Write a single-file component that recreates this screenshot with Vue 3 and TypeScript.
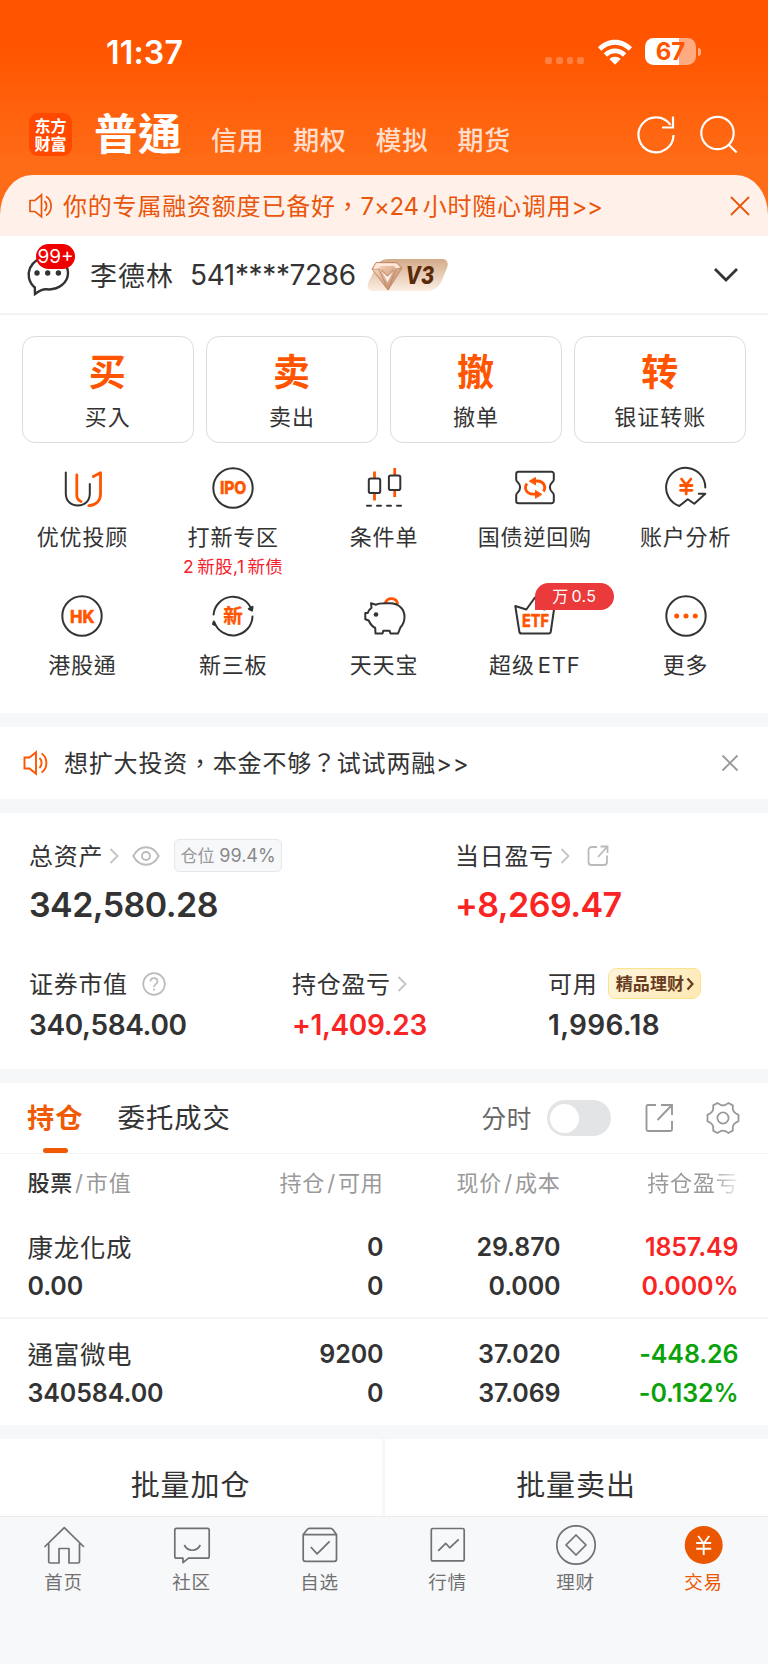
<script setup lang="ts">
interface Holding {
  name: string
  value: string
  held: string
  usable: string
  price: string
  cost: string
  profit: string
  rate: string
  up: boolean
}

interface Run {
  text: string
  before: boolean
  after: boolean
}

const accountTabs: string[] = ['信用', '期权', '模拟', '期货']

const trades: { mark: string; label: string }[] = [
  { mark: '买', label: '买入' },
  { mark: '卖', label: '卖出' },
  { mark: '撤', label: '撤单' },
  { mark: '转', label: '银证转账' },
]

const tools: { id: string; label: string; note?: string; badge?: string }[] = [
  { id: 'advisor', label: '优优投顾' },
  { id: 'ipo', label: '打新专区', note: '2新股,1新债' },
  { id: 'candle', label: '条件单' },
  { id: 'repo', label: '国债逆回购' },
  { id: 'analysis', label: '账户分析' },
  { id: 'hk', label: '港股通' },
  { id: 'neeq', label: '新三板' },
  { id: 'pig', label: '天天宝' },
  { id: 'etf', label: '超级ETF', badge: '万0.5' },
  { id: 'more', label: '更多' },
]

const holdings: Holding[] = [
  { name: '康龙化成', value: '0.00', held: '0', usable: '0', price: '29.870', cost: '0.000', profit: '1857.49', rate: '0.000%', up: true },
  { name: '通富微电', value: '340584.00', held: '9200', usable: '0', price: '37.020', cost: '37.069', profit: '-448.26', rate: '-0.132%', up: false },
]

const navItems: { id: string; label: string }[] = [
  { id: 'home', label: '首页' },
  { id: 'community', label: '社区' },
  { id: 'watch', label: '自选' },
  { id: 'market', label: '行情' },
  { id: 'wealth', label: '理财' },
  { id: 'trade', label: '交易' },
]

// Splits a label into Latin and Han runs so a small gap can sit between them.
function runs(label: string): Run[] {
  const parts = label.match(/[\x21-\x7e]+|[^\x21-\x7e]+/g) ?? []
  return parts.map((text, i) => ({
    text,
    before: i > 0 && /^[A-Za-z0-9]/.test(text),
    after: i < parts.length - 1 && /[A-Za-z0-9]$/.test(text),
  }))
}
</script>

<template>
  <div class="page">
    <header class="top">
      <div class="status">
        <span class="time">11:37</span>
        <div class="status-right">
          <span class="dots"><i v-for="n in 4" :key="n"></i></span>
          <svg class="wifi" width="34" height="26" viewBox="0 0 34 26">
            <path fill="#fff" d="M0 8.2C9.5-1.9 24.500-1.900 34 8.200l-3.300 3.500C23 3.700 11 3.700 3.300 11.700z" />
            <path fill="#fff" d="M5.700 14.200c6.400-6.400 16.200-6.400 22.600 0l-3.400 3.500c-4.600-4.500-11.200-4.500-15.800 0z" />
            <path fill="#fff" d="M11.400 20c3.200-3.100 8-3.100 11.200 0L17 25.800z" />
          </svg>
          <span class="battery"><b>67</b></span>
          <span class="nub"></span>
        </div>
      </div>
      <div class="title-row">
        <div class="logo">东方<br />财富</div>
        <h1>普通</h1>
        <nav class="acct-tabs"><span v-for="t in accountTabs" :key="t">{{ t }}</span></nav>
        <svg class="head-icons" width="102" height="42" viewBox="0 0 102 42" fill="none" stroke="#fff" stroke-width="2.200">
          <path d="M36.500 21A17.500 17.500 0 1 1 33.500 11" />
          <path d="M36 2.500V13.500H25" />
          <circle cx="80.500" cy="19" r="16.200" />
          <path d="M91.500 30.500L99.700 38.500" />
        </svg>
      </div>
      <div class="promo">
        <svg width="26" height="26" viewBox="0 0 26 26" fill="none" stroke="#e9560b" stroke-width="1.700">
          <path d="M2 7.500h5l6.500-5.700v22l-6.500-5.300h-5z" />
          <path d="M16.500 8c2.800 2.500 2.800 7.500 0 10M18 3.500c6.800 4 6.800 15 0 19" />
        </svg>
        <span class="promo-text">你的专属融资额度已备好，<em>7×24</em>小时随心调用<em class="end">&gt;&gt;</em></span>
        <svg width="22" height="22" viewBox="0 0 22 22" fill="none" stroke="#e9560b" stroke-width="1.800"><path d="M2 2l18 18M20 2L2 20" /></svg>
      </div>
    </header>

    <section class="account">
      <div class="msg">
        <svg width="46" height="44" viewBox="0 0 46 44">
          <path d="M9.800 33.500C-3 22 5.500 3 23 3c11.500 0 20 6.800 20 16S34 36.500 21.500 35.300C18 35 14 37 10 40z" fill="none" stroke="#333" stroke-width="2.400" />
          <g fill="#333"><circle cx="12" cy="19" r="2.700" /><circle cx="22.700" cy="19" r="2.700" /><circle cx="33.400" cy="19" r="2.700" /></g>
        </svg>
        <span class="count">99+</span>
      </div>
      <span class="name">李德林</span>
      <span class="number">541****7286</span>
      <div class="level">
        <svg width="82" height="34" viewBox="0 0 82 34">
          <defs>
            <linearGradient id="levelBg" x1="0" y1="0" x2="0" y2="1"><stop offset="0" stop-color="#d2ab89" /><stop offset="1" stop-color="#fdeee3" /></linearGradient>
            <linearGradient id="gem" x1="0" y1="0" x2="1" y2="1"><stop offset="0" stop-color="#ffe0ca" /><stop offset="1" stop-color="#b97e5c" /></linearGradient>
          </defs>
          <path d="M22 1h53c5 0 7 4 5 9l-5 12c-3 7-8 11-15 11H7c-6 0-8-4-5-10L8 11C11 4 15 1 22 1z" fill="url(#levelBg)" />
          <path d="M9 4.500h21l5 5.500-14 22L5 11z" fill="url(#gem)" />
          <path d="M9 4.500L5 11l16 21 14-22-5-5.500z M5 11l7 0 9 21 8-21 6-1" fill="none" stroke="#c18c6c" stroke-width="1" />
          <path d="M9.500 5.500h20l4 4-4.500 1-2-2.500H13.500l-2 2.500-5 .5z" fill="#ffe8d9" />
          <path d="M14.500 12l6 6 6-6-6 12.500z" fill="#fff1e7" />
          <path d="M14.500 12l6 6 6-6" fill="none" stroke="#c99574" stroke-width="1.200" />
          <text x="38.500" y="26" class="level-text" textLength="28.500" lengthAdjust="spacingAndGlyphs">V3</text>
        </svg>
      </div>
      <svg class="chev" width="26" height="16" viewBox="0 0 26 16" fill="none" stroke="#333" stroke-width="2.800"><path d="M2 2l11 11L24 2" /></svg>
    </section>

    <section class="trades">
      <div v-for="t in trades" :key="t.mark" class="trade"><b>{{ t.mark }}</b><span>{{ t.label }}</span></div>
    </section>

    <section class="tools">
      <div v-for="t in tools" :key="t.id" class="tool">
        <div class="tool-icon">
          <svg width="44" height="44" viewBox="0 0 44 44" fill="none" stroke="#333" stroke-width="2" stroke-linecap="round" stroke-linejoin="round">
            <template v-if="t.id === 'advisor'">
              <path d="M5.800 6.500V27.500c0 7.500 5 12 12 12s12-4.500 12-12V18" />
              <path class="accent" d="M16.800 9v20c0 3 1.500 5.300 4.200 6.500M33.300 10.500l7.200-3.800V28c0 7-4.500 11.200-11.700 11.700" />
            </template>
            <template v-else-if="t.id === 'ipo'">
              <circle cx="22" cy="22" r="19.700" />
              <text class="glyph" x="8.900" y="28.300" textLength="26.500" lengthAdjust="spacingAndGlyphs">IPO</text>
            </template>
            <template v-else-if="t.id === 'candle'">
              <path class="accent" stroke-linecap="butt" d="M12.500 5.500v6.500M12.500 27.500v7M32.700 2v7M32.700 24.500v6.500" />
              <rect x="6.800" y="12.500" width="11.400" height="14.500" rx="1.800" />
              <rect x="26.900" y="9.500" width="11.400" height="14.500" rx="1.800" />
              <path d="M5 39.700h35" stroke-dasharray="4 6" />
            </template>
            <template v-else-if="t.id === 'repo'">
              <path d="M5.500 5.700h33a2.300 2.300 0 0 1 2.300 2.300v5.500q0 1.500-1.300 2.500c-3.500 3-3.500 7.500 0 10.500q1.300 1 1.300 2.500V35a2.300 2.300 0 0 1-2.300 2.300h-33A2.300 2.300 0 0 1 3.200 35v-5.800q0-1.500 1.300-2.500c3.500-3 3.500-7.700 0-10.700Q3.200 15 3.200 13.500V8a2.300 2.300 0 0 1 2.300-2.300z" />
              <path class="accent" stroke-linecap="butt" d="M14 17.500c-3.500 5-.5 10.500 6 10.700h3M30.500 25.500c3-5 .2-10.300-6-10.500h-4" />
              <path d="M16.500 15l6-3.500v7zM28.500 28.200l-6-3.700v7.400z" fill="#ff5500" stroke="#ff5500" stroke-width="1" />
            </template>
            <template v-else-if="t.id === 'analysis'">
              <path d="M41.300 21.500A19.600 19.600 0 1 0 15.300 40l8.500-6.800 6.500 4.600 11-10h-6.500" />
              <path class="accent" d="M17.500 13l4.700 6 4.700-6M22.200 19v9M16.500 19.500h11.500M16.500 24.300h11.500" />
            </template>
            <template v-else-if="t.id === 'hk'">
              <circle cx="22" cy="22" r="19.700" />
              <text class="glyph" x="10" y="28.500" textLength="24.500" lengthAdjust="spacingAndGlyphs">HK</text>
            </template>
            <template v-else-if="t.id === 'neeq'">
              <path d="M2.600 20.500A19.600 19.600 0 0 1 40.500 15.500M41.500 22.500A19.600 19.600 0 0 1 3.500 28.500" />
              <path d="M41 16.500l-3.200-1.700 3.700-2zM2.800 27.500l1.200 3.500-2-1z" fill="#333" />
              <text class="glyph hanzi" x="12.200" y="29">新</text>
            </template>
            <template v-else-if="t.id === 'pig'">
              <path class="accent" d="M23.500 8.500c2.200-5.500 10.500-5 12 .7" />
              <path d="M9 9.300l5 1.500c2.500-2 8-1.500 14-1.500 9 0 14.500 6 14.500 13.500 0 4.500-1.500 8-4 10.500L36 39.500h-7.500l-1-2.800h-6.200l-.8 2.800h-7l-.3-5.500c-2.500-1.300-5-4-6.500-7.500l-3.400-1.300V19h2.500c.6-2 2-4 3.700-5.300z" />
              <circle cx="14" cy="20.500" r="2.300" fill="#333" stroke="none" />
            </template>
            <template v-else-if="t.id === 'etf'">
              <path d="M2.300 12l4 25.500q.3 2 2.300 2h27q2 0 2.200-2L41.500 12 31 15.500 22 3.500 13.300 15.500z" />
              <text class="glyph" x="9" y="32.500" textLength="27" lengthAdjust="spacingAndGlyphs">ETF</text>
            </template>
            <template v-else>
              <circle cx="22" cy="22" r="19.700" />
              <g fill="#ff5500" stroke="none"><circle cx="12.700" cy="22" r="2.500" /><circle cx="22" cy="22" r="2.500" /><circle cx="31.300" cy="22" r="2.500" /></g>
            </template>
          </svg>
          <span v-if="t.badge" class="tool-badge"><i v-for="r in runs(t.badge)" :key="r.text" :class="{ before: r.before, after: r.after }">{{ r.text }}</i></span>
        </div>
        <span class="tool-label"><i v-for="r in runs(t.label)" :key="r.text" :class="{ before: r.before, after: r.after }">{{ r.text }}</i></span>
        <span v-if="t.note" class="tool-note"><i v-for="r in runs(t.note)" :key="r.text" :class="{ before: r.before, after: r.after }">{{ r.text }}</i></span>
      </div>
    </section>

    <section class="notice">
      <svg width="26" height="26" viewBox="0 0 26 26" fill="none" stroke="#ff5500" stroke-width="1.900">
        <path d="M1.500 7.500h5l6.500-5.300v21.600l-6.500-5.300h-5z" />
        <path d="M16.500 8c2.800 2.500 2.800 7.500 0 10M18.500 3.500c6.500 4 6.500 15 0 19" />
      </svg>
      <span class="notice-text">想扩大投资，本金不够？试试两融&gt;&gt;</span>
      <svg width="18" height="18" viewBox="0 0 18 18" fill="none" stroke="#999" stroke-width="1.800"><path d="M1.500 1.500l15 15M16.500 1.500l-15 15" /></svg>
    </section>

    <section class="assets">
      <div class="asset-row major">
        <div class="asset total">
          <div class="asset-label">
            <span>总资产</span>
            <svg class="arrow" width="10" height="16" viewBox="0 0 10 16"><path d="M1.500 1l7 7-7 7" /></svg>
            <svg class="eye" width="28" height="20" viewBox="0 0 28 20" fill="none" stroke="#bbb" stroke-width="1.900"><path d="M1.300 10C4.500 4 9 1.200 14 1.200S23.500 4 26.700 10C23.500 16 19 18.800 14 18.800S4.500 16 1.300 10z" /><circle cx="14" cy="10" r="4" /></svg>
            <span class="ratio">仓位 <em>99.4%</em></span>
          </div>
          <strong>342,580.28</strong>
        </div>
        <div class="asset">
          <div class="asset-label">
            <span>当日盈亏</span>
            <svg class="arrow" width="10" height="16" viewBox="0 0 10 16"><path d="M1.500 1l7 7-7 7" /></svg>
            <svg class="share-small" width="22" height="22" viewBox="0 0 22 22" fill="none" stroke="#bbb" stroke-width="1.800"><path d="M10 2H4.500A3 3 0 0 0 1.500 5v12a3 3 0 0 0 3 3h12.500a3 3 0 0 0 3-3v-6.500M13.500 1.500h7v6.500M20 2l-9 10" /></svg>
          </div>
          <strong class="up">+8,269.47</strong>
        </div>
      </div>
      <div class="asset-row minor">
        <div class="asset">
          <div class="asset-label">
            <span>证券市值</span>
            <svg class="help" width="24" height="24" viewBox="0 0 24 24" fill="none" stroke="#bbb" stroke-width="1.700"><circle cx="12" cy="12" r="10.800" /><path d="M8.500 9.500c0-4.500 7-4.500 7 0 0 2.700-3.500 2.700-3.500 5.500M12 16.500v2" /></svg>
          </div>
          <strong>340,584.00</strong>
        </div>
        <div class="asset">
          <div class="asset-label">
            <span>持仓盈亏</span>
            <svg class="arrow" width="10" height="16" viewBox="0 0 10 16"><path d="M1.500 1l7 7-7 7" /></svg>
          </div>
          <strong class="up">+1,409.23</strong>
        </div>
        <div class="asset usable">
          <div class="asset-label">
            <span>可用</span>
            <span class="premium">精品理财<svg width="8" height="14" viewBox="0 0 8 14" fill="none" stroke="#683c1e" stroke-width="2.200"><path d="M1.500 1.500l5 5.500-5 5.500" /></svg></span>
          </div>
          <strong>1,996.18</strong>
        </div>
      </div>
    </section>

    <section class="positions">
      <div class="pos-tabs">
        <span class="pos-tab active">持仓</span>
        <span class="pos-tab">委托成交</span>
        <span class="minute">分时</span>
        <span class="toggle"><i></i></span>
        <svg class="share" width="30" height="30" viewBox="0 0 30 30" fill="none" stroke="#999" stroke-width="1.900"><path d="M12 2H4q-1.500 0-1.500 1.500v23Q2.500 28 4 28h22.500q1.500 0 1.500-1.500V18M17 2h11v10M27.500 2.500L13.500 17" /></svg>
        <svg class="gear" width="34" height="34" viewBox="0 0 34 34" fill="none" stroke="#999" stroke-width="1.800" stroke-linejoin="round">
          <path d="M11.500 2l3 1.800q2.500 1 5 0l3-1.800 4.300 2.400v3.800q.5 2.500 2.800 4l2.900 1.700v6.200l-2.900 1.700q-2.300 1.500-2.800 4v3.800L22.500 32l-3-1.800q-2.500-1-5 0l-3 1.800-4.300-2.400v-3.800q-.5-2.500-2.800-4L1.500 20.100v-6.200l2.900-1.700q2.300-1.500 2.800-4V4.400z" />
          <circle cx="17" cy="17" r="5.600" />
        </svg>
      </div>
      <div class="table-head">
        <span><b>股票</b><i>/</i>市值</span>
        <span>持仓<i>/</i>可用</span>
        <span>现价<i>/</i>成本</span>
        <span class="fade">持仓盈亏</span>
      </div>
      <div v-for="h in holdings" :key="h.name" class="holding">
        <div><span class="stock">{{ h.name }}</span><span>{{ h.value }}</span></div>
        <div><span>{{ h.held }}</span><span>{{ h.usable }}</span></div>
        <div><span>{{ h.price }}</span><span>{{ h.cost }}</span></div>
        <div :class="h.up ? 'up' : 'down'"><span>{{ h.profit }}</span><span>{{ h.rate }}</span></div>
      </div>
    </section>

    <section class="batch"><span>批量加仓</span><span>批量卖出</span></section>

    <nav class="bottom-nav">
      <div v-for="n in navItems" :key="n.id" class="nav-item" :class="{ active: n.id === 'trade' }">
        <svg width="44" height="44" viewBox="0 0 44 44" fill="none" stroke="#707070" stroke-width="1.700" stroke-linejoin="round">
          <path v-if="n.id === 'home'" d="M2.500 24L22.300 4.700 42 24M6.700 20.500V38.500q0 1.500 1.500 1.500H17V25.500h10V40h9q1.500 0 1.500-1.500v-18" />
          <path v-else-if="n.id === 'community'" d="M6.500 5.300h31q1.700 0 1.700 1.700v26.500q0 1.700-1.700 1.700H18.500l-5.500 4.500v-4.500H6.500q-1.700 0-1.700-1.700V7q0-1.700 1.700-1.700zM14.300 22c3.500 7 12.500 7 16 0" />
          <path v-else-if="n.id === 'watch'" d="M5.200 11.500L9 6.700q1-1.400 2.500-1.400h21q1.500 0 2.500 1.400l3.500 4.800v24.800q0 2-2 2H7.200q-2 0-2-2zM5.200 11.700h33.300M12.800 24l6.300 6.800 12.500-12.500" />
          <path v-else-if="n.id === 'market'" d="M7 5.500h29.500q1.700 0 1.700 1.700v29q0 1.700-1.700 1.700H7q-1.700 0-1.700-1.700v-29Q5.300 5.500 7 5.500zM12.200 27.800l7.500-7.500 4 4.500 9-8.500" />
          <template v-else-if="n.id === 'wealth'"><circle cx="22" cy="22" r="19.200" /><path d="M22 12l10 10-10 10-10-10z" /></template>
          <template v-else><circle cx="21.700" cy="22" r="19" fill="#eb5600" stroke="none" /><path stroke="#fff" stroke-width="1.900" d="M16.200 13l5.500 7.500 5.500-7.500M21.700 20.500V32M14.200 20h15M14.200 25.800h15" /></template>
        </svg>
        <span>{{ n.label }}</span>
      </div>
    </nav>
  </div>
</template>

<style>
body {
  margin: 0;
  background: #fff;
}
</style>

<style scoped>
.page {
  width: 768px;
  height: 1665px;
  overflow: hidden;
  background: #fff;
  color: #333;
  font-family: Inter, 'Noto Sans CJK TC', 'Noto Sans CJK SC', sans-serif;
}
.page * {
  box-sizing: border-box;
}
svg {
  flex: none;
  display: block;
}
span {
  white-space: nowrap;
}
i,
em {
  font-style: normal;
}
.top {
  height: 236px;
  background: linear-gradient(#ff5500 0, #ff5500 50px, #ff6c17 165px, #ff6c17 215px, #fff1ea 215px);
}
.status {
  height: 103px;
  padding: 0 67px 0 106px;
  display: flex;
  align-items: center;
  justify-content: space-between;
}
.time {
  color: #fff;
  font-size: 32px;
  font-weight: 600;
  line-height: 40px;
  letter-spacing: 0.2px;
  padding-top: 2px;
}
.status-right {
  display: flex;
  align-items: center;
}
.dots {
  display: flex;
  gap: 4px;
  padding-top: 18px;
  margin-right: 14px;
}
.dots i {
  width: 6.700px;
  height: 7px;
  border-radius: 2px;
  background: rgba(255, 255, 255, 0.25);
}
.battery {
  width: 51px;
  height: 27px;
  border-radius: 8.500px;
  margin-left: 13px;
  background: linear-gradient(90deg, #fff 34px, rgba(255, 255, 255, 0.5) 34px);
  color: #ff5500;
  text-align: center;
  font-size: 24px;
  line-height: 28px;
}
.battery b {
  font-weight: 700;
}
.nub {
  width: 3px;
  height: 8px;
  border-radius: 0 4px 4px 0;
  margin-left: 2px;
  background: rgba(255, 255, 255, 0.5);
}
.title-row {
  height: 72px;
  padding: 0 29px;
  display: flex;
  align-items: flex-start;
}
.logo {
  width: 43px;
  height: 43px;
  margin-top: 10px;
  padding-top: 2.500px;
  border-radius: 9px;
  background: #ff4800;
  color: #fff;
  text-align: center;
  font-family: 'Noto Sans CJK SC', sans-serif;
  font-weight: 700;
  font-size: 16px;
  line-height: 18px;
}
h1 {
  margin: 1px 0 0 22px;
  width: 87px;
  color: #fff;
  font-size: 43.500px;
  font-weight: 700;
  line-height: 60px;
  letter-spacing: 0.5px;
  white-space: nowrap;
}
.acct-tabs {
  display: flex;
  gap: 29px;
  margin-left: 30px;
  padding-top: 18px;
  color: rgba(255, 255, 255, 0.8);
  font-size: 26px;
  font-weight: 500;
  letter-spacing: 0.6px;
  line-height: 40px;
}
.head-icons {
  margin: 10.500px 0 0 auto;
}
.promo {
  height: 61px;
  padding: 0 17px 0 28px;
  border-radius: 32px 32px 0 0 / 40px 40px 0 0;
  background: #fff1ea;
  color: #e9560b;
  display: flex;
  align-items: center;
}
.promo > svg:last-child {
  margin-left: auto;
}
.promo-text {
  margin: -2px 0 0 9px;
  font-size: 24px;
  letter-spacing: 0.8px;
}
.promo-text em {
  letter-spacing: -0.3px;
  margin-right: 4px;
}
.promo-text .end {
  letter-spacing: -0.4px;
}
.account {
  height: 79px;
  border-bottom: 2px solid #f3f3f4;
  padding: 0 29px 0 24.500px;
  display: flex;
  align-items: center;
}
.msg {
  position: relative;
  width: 46px;
  height: 44px;
  margin-top: 3px;
}
.count {
  position: absolute;
  left: 11.500px;
  top: -10.500px;
  width: 39px;
  height: 25px;
  border-radius: 12.500px;
  background: #ee0000;
  color: #fff;
  text-align: center;
  font-size: 19px;
  line-height: 26px;
}
.name {
  margin-left: 19.500px;
  width: 100px;
  font-size: 27px;
  letter-spacing: 1px;
}
.number {
  width: 177px;
  font-size: 28px;
  letter-spacing: -0.350px;
}
.level-text {
  font-family: Inter, sans-serif;
  font-style: italic;
  font-weight: 800;
  font-size: 24px;
  fill: #5a2a0a;
}
.chev {
  margin-left: auto;
}
.trades {
  padding: 21px 22px 0;
  display: grid;
  grid-template-columns: repeat(4, 1fr);
  gap: 12.600px;
}
.trade {
  height: 107px;
  border: 1.500px solid #dcdcde;
  border-radius: 13px;
  display: flex;
  flex-direction: column;
  align-items: center;
}
.trade b {
  margin: 10px 1px 0 0;
  color: #ff5500;
  font-size: 37px;
  line-height: 52px;
  font-weight: 700;
}
.trade span {
  margin-top: 3px;
  font-size: 22px;
  line-height: 30px;
  letter-spacing: 1px;
}
.tools {
  height: 270px;
  padding: 23px 7px 0;
  display: grid;
  grid-template-columns: repeat(5, 1fr);
  grid-template-rows: 128px 118px;
}
.tool {
  display: flex;
  flex-direction: column;
  align-items: center;
}
.tool-icon {
  position: relative;
  height: 44px;
}
.accent {
  stroke: #ff5500;
  stroke-width: 2.800;
}
.glyph {
  font-family: Inter, sans-serif;
  font-weight: 700;
  font-size: 18px;
  fill: #ff5500;
  stroke: #ff5500;
  stroke-width: 0.7;
}
.glyph.hanzi {
  font-family: 'Noto Sans CJK TC', sans-serif;
  font-size: 19.500px;
  stroke-width: 0.3;
}
.tool-badge {
  position: absolute;
  left: 22px;
  top: -11.500px;
  width: 79px;
  height: 27px;
  border-radius: 14px 14px 14px 0;
  background: #eb3a3c;
  color: #fff;
  font-size: 16px;
  line-height: 27px;
  letter-spacing: 0.3px;
  text-align: center;
}
.tool-label {
  margin-top: 12px;
  font-size: 22px;
  line-height: 30px;
  letter-spacing: 0.8px;
}
.tool-note {
  color: #f5222d;
  font-size: 17.500px;
  line-height: 22px;
  margin-top: 3.500px;
  letter-spacing: 0.4px;
}
.before {
  margin-left: 3px;
}
.after {
  margin-right: 3px;
}
.notice {
  height: 100px;
  border-top: 14px solid #f6f7f9;
  border-bottom: 14px solid #f6f7f9;
  padding: 0 29px 0 23px;
  display: flex;
  align-items: center;
}
.notice-text {
  margin: -3px 0 0 15px;
  font-size: 24px;
  letter-spacing: 0.8px;
}
.notice > svg:last-child {
  margin-left: auto;
}
.assets {
  height: 256px;
  padding: 22px 30px 0 29px;
}
.asset-row {
  display: flex;
}
.major .total {
  width: 426px;
}
.minor {
  display: grid;
  grid-template-columns: 263px 256px 1fr;
  margin-top: 37px;
}
.asset-label {
  display: flex;
  align-items: center;
  height: 40px;
  font-size: 24px;
  letter-spacing: 0.7px;
}
.asset-label > span:first-child {
  margin-top: -1.500px;
}
.asset-label > svg,
.ratio,
.premium {
  margin-top: 1.500px;
}
.arrow {
  fill: none;
  stroke: #c4c4c4;
  stroke-width: 1.800;
  margin-left: 6px;
}
.eye {
  margin-left: 13px;
}
.ratio {
  margin-left: 14px;
  width: 108px;
  height: 33px;
  border: 1.500px solid #e6e7ea;
  border-radius: 5px;
  background: #f7f8fa;
  color: #999;
  text-align: center;
  font-size: 17px;
  line-height: 31px;
  letter-spacing: 0;
}
.ratio em {
  font-size: 18px;
  color: #888;
}
.share-small {
  margin-left: 17px;
}
.help {
  margin-left: 14px;
}
.asset strong {
  display: block;
  font-weight: 600;
}
.major strong {
  margin-top: 9px;
  font-size: 34px;
  line-height: 42px;
  letter-spacing: -0.550px;
}
.minor strong {
  margin-top: 3px;
  font-size: 28px;
  line-height: 38px;
  letter-spacing: -0.350px;
}
.minor .usable strong {
  letter-spacing: 0.3px;
}
.premium {
  margin-left: 11px;
  width: 93px;
  height: 31px;
  border: 1.500px solid #fbe38a;
  border-radius: 9px 7px 9px 7px;
  background: linear-gradient(135deg, #fff5df, #ffe9b3);
  color: #683c1e;
  display: flex;
  align-items: center;
  justify-content: center;
  gap: 2px;
  font-size: 17px;
  line-height: 26px;
  font-weight: 700;
  letter-spacing: 0.1px;
}
.up,
.holding .up {
  color: #f92424;
}
.down {
  color: #0aa20a;
}
.positions {
  border-top: 14px solid #f6f7f9;
}
.pos-tabs {
  height: 71px;
  border-bottom: 1.500px solid #f3f4f5;
  padding: 0 28px 0 27px;
  display: flex;
  align-items: center;
}
.pos-tab {
  position: relative;
  height: 70px;
  line-height: 72px;
  font-size: 27.300px;
  letter-spacing: 1px;
  margin-right: 34px;
}
.pos-tab.active {
  color: #f05a05;
  font-weight: 600;
}
.pos-tab.active::after {
  content: '';
  position: absolute;
  left: 16px;
  bottom: 0;
  width: 25px;
  height: 5px;
  border-radius: 3px;
  background: #f05a05;
}
.minute {
  margin: -1px 0 0 auto;
  color: #666;
  font-size: 24.500px;
  letter-spacing: 0.7px;
}
.toggle {
  margin-left: 14.500px;
  width: 64.500px;
  height: 36px;
  border-radius: 18px;
  background: #e3e4e6;
  padding: 3.500px;
}
.toggle i {
  display: block;
  width: 29px;
  height: 29px;
  border-radius: 50%;
  background: #fff;
}
.share {
  margin-left: 33px;
}
.gear {
  margin-left: 32px;
}
.table-head,
.holding {
  display: grid;
  grid-template-columns: 200px 156px 177px 178px;
  padding: 0 29px 0 27.500px;
}
.table-head {
  height: 61px;
  line-height: 58px;
  color: #999;
  font-size: 22px;
  letter-spacing: 0.8px;
}
.table-head span:not(:first-child) {
  text-align: right;
}
.table-head b {
  font-weight: 500;
  color: #333;
}
.table-head i {
  padding: 0 2px;
}
.table-head .fade {
  -webkit-mask-image: linear-gradient(90deg, #000 150px, transparent 182px);
  mask-image: linear-gradient(90deg, #000 150px, transparent 182px);
}
.holding {
  height: 106px;
  padding-top: 16px;
  font-size: 25px;
  font-weight: 600;
  letter-spacing: -0.1px;
}
.holding:nth-child(3) {
  height: 104px;
  padding-top: 13px;
  border-bottom: 2px solid #f6f6f7;
}
.holding div {
  text-align: right;
}
.holding div:first-child {
  text-align: left;
}
.holding span {
  display: block;
  height: 39px;
  line-height: 39px;
}
.holding .stock {
  font-size: 25.500px;
  font-weight: 400;
  letter-spacing: 0.7px;
}
.batch {
  height: 91px;
  border-top: 14px solid #f6f7f9;
  display: grid;
  grid-template-columns: 1fr 1fr;
  background: linear-gradient(90deg, transparent 382px, #f6f7f9 382px, #f6f7f9 385px, transparent 385px);
}
.batch span {
  text-align: center;
  font-size: 29px;
  line-height: 93px;
  letter-spacing: 0.9px;
}
.batch span:first-child {
  padding-right: 3px;
}
.bottom-nav {
  height: 148px;
  border-top: 1.500px solid #ebecee;
  background: #f7f8fa;
  display: grid;
  grid-template-columns: repeat(6, 1fr);
  padding-top: 6px;
}
.nav-item {
  display: flex;
  flex-direction: column;
  align-items: center;
  color: #707070;
  font-size: 18.500px;
  line-height: 26px;
}
.nav-item span {
  margin: 2px 1px 0 0;
  letter-spacing: 0.8px;
}
.nav-item.active {
  color: #eb5600;
}
</style>
